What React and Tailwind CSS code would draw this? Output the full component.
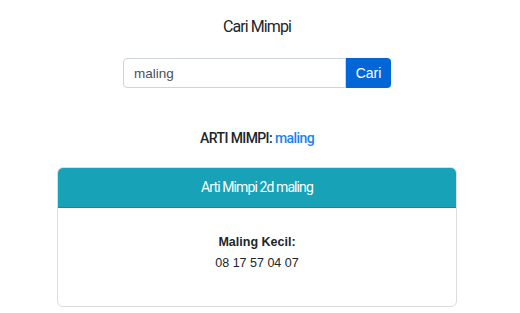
import React, { useState } from 'react';

const condensed = { fontFamily: '"Roboto", "Liberation Sans", sans-serif' };

export default function App() {
    const [query, setQuery] = useState('maling');

    return (
        <div className="w-[520px] h-[313px] bg-white overflow-hidden">
            <div className="w-[514px] flex flex-col items-center">
                <h1
                    className="mt-[17px] text-[16px] leading-[20px] text-[#212529] tracking-[-0.9px] font-normal"
                    style={condensed}
                >
                    Cari Mimpi
                </h1>

                <div className="mt-[21px] flex">
                    <input
                        value={query}
                        onChange={(e) => setQuery(e.target.value)}
                        className="w-[223px] h-[30px] pl-[10px] border border-[#ced4da] rounded-l-[4px] text-[13.5px] text-[#495057] outline-none font-['Liberation_Sans',sans-serif]"
                    />
                    <button className="w-[45px] h-[30px] bg-[#0366d6] text-white text-[14px] rounded-r-[4px] font-['Liberation_Sans',sans-serif]">
                        Cari
                    </button>
                </div>

                <p
                    className="mt-[41px] text-[14px] leading-[18px] text-[#212529] font-medium tracking-[-0.6px]"
                    style={condensed}
                >
                    ARTI MIMPI: <span className="text-[#1a82f0]">maling</span>
                </p>

                <div className="mt-[20px] w-[400px] border border-[#dcdcdc] rounded-[6px] overflow-hidden">
                    <div
                        className="h-[40px] bg-[#17a2b8] border-b border-[#138a9c] flex items-center justify-center text-white text-[14px] tracking-[-0.9px]"
                        style={condensed}
                    >
                        Arti Mimpi 2d maling
                    </div>
                    <div className="h-[98px] flex flex-col items-center pt-[24px] text-[12px] leading-[21px] text-[#212529] font-['Liberation_Sans',sans-serif]">
                        <b className="text-[12.5px]">Maling Kecil:</b>
                        <span className="text-[12.5px]">08 17 57 04 07</span>
                    </div>
                </div>
            </div>
        </div>
    );
}
